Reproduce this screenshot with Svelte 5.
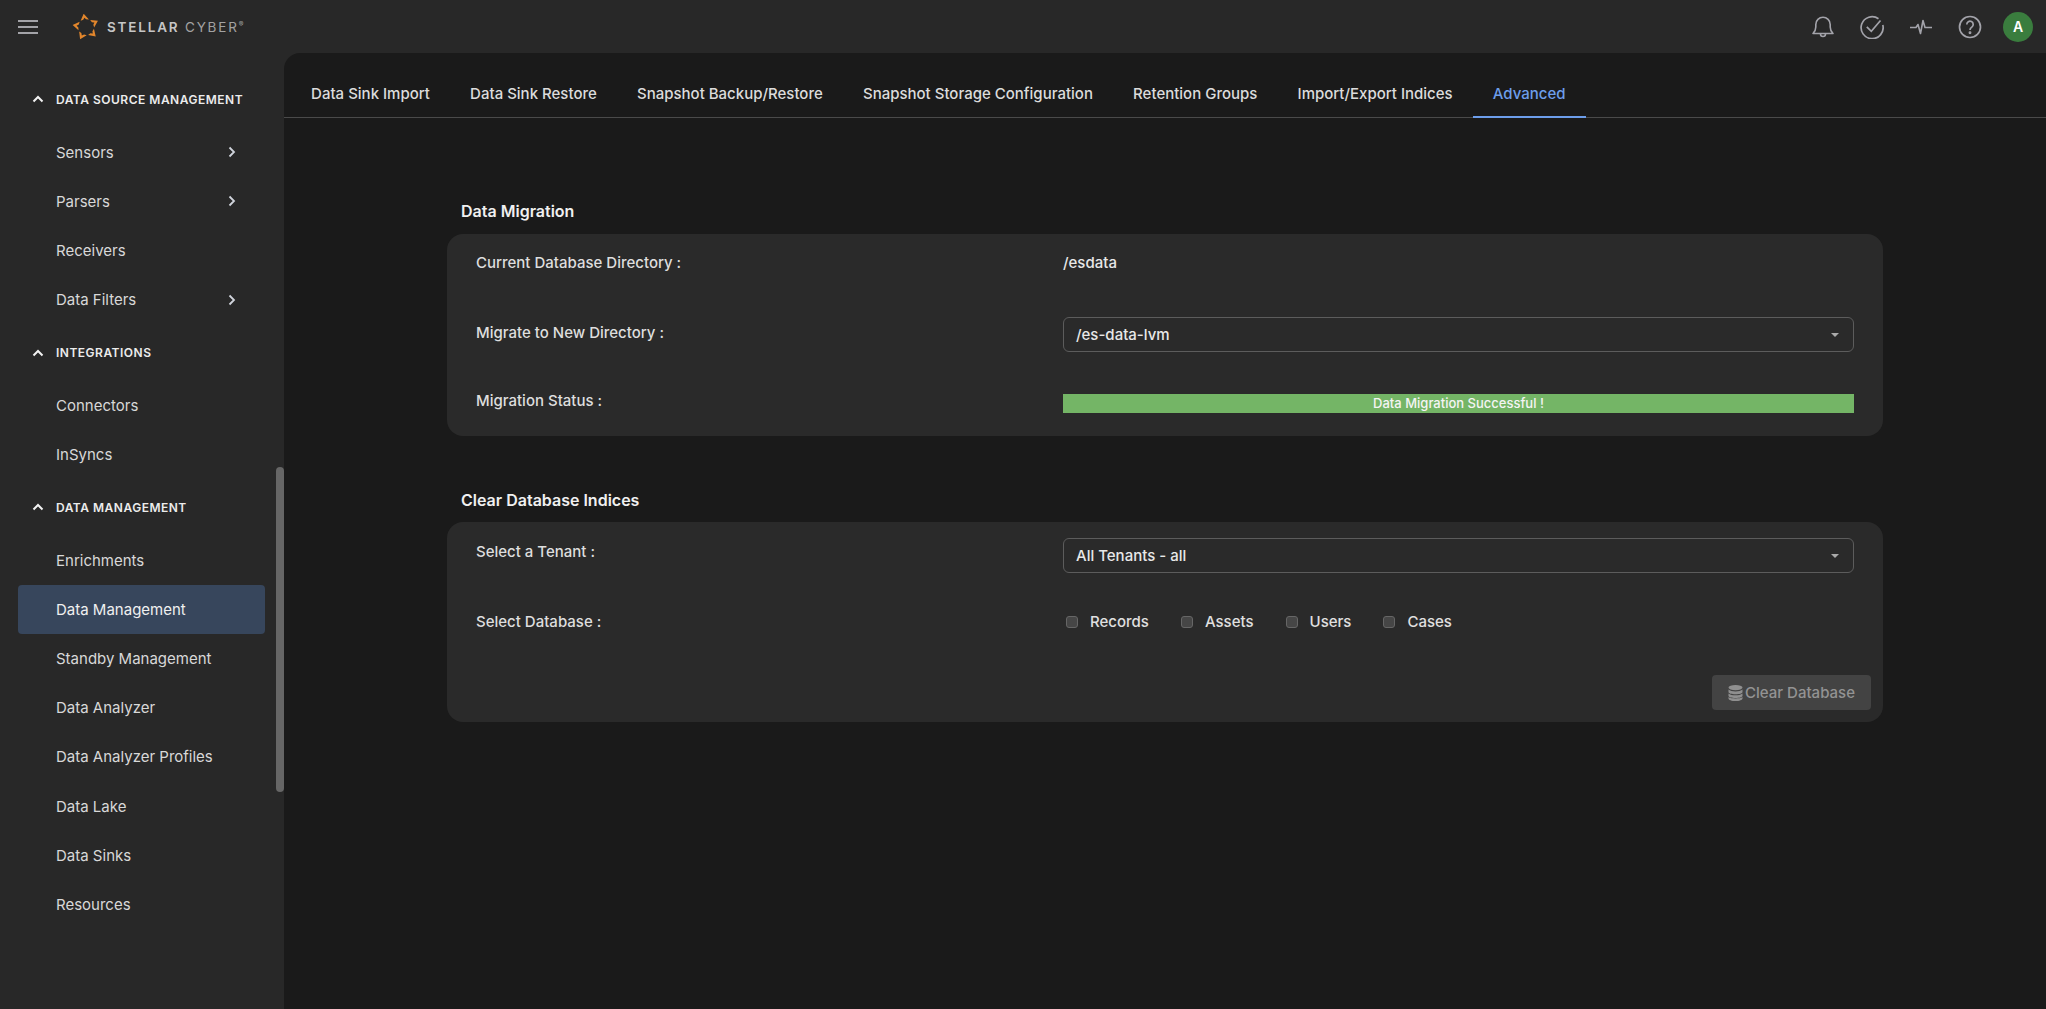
<script>
  const nav = [
    { title: "DATA SOURCE MANAGEMENT", items: [
      { label: "Sensors", more: true },
      { label: "Parsers", more: true },
      { label: "Receivers" },
      { label: "Data Filters", more: true },
    ] },
    { title: "INTEGRATIONS", items: [{ label: "Connectors" }, { label: "InSyncs" }] },
    { title: "DATA MANAGEMENT", items: [
      { label: "Enrichments" },
      { label: "Data Management", active: true },
      { label: "Standby Management" },
      { label: "Data Analyzer" },
      { label: "Data Analyzer Profiles" },
      { label: "Data Lake" },
      { label: "Data Sinks" },
      { label: "Resources" },
    ] },
  ];
  const tabs = [
    "Data Sink Import",
    "Data Sink Restore",
    "Snapshot Backup/Restore",
    "Snapshot Storage Configuration",
    "Retention Groups",
    "Import/Export Indices",
    "Advanced",
  ];
  const databases = ["Records", "Assets", "Users", "Cases"];
</script>

<div class="shell">
  <header class="topbar">
    <div class="brand">
      <svg class="burger" width="20" height="16" viewBox="0 0 20 16">
        <path d="M0 2h20M0 8h20M0 14h20" stroke="#a3a3a8" stroke-width="2" />
      </svg>
      <svg class="star" width="28" height="26" viewBox="-14 -13 28 26">
        {#each [-10, 62, 134, 206, 278] as angle}
          <path
            transform="rotate({angle})"
            d="M0 -13.500 L4.200 -7 L1.500 -7.500 L0 -9.500 L-1.500 -7.500 L-4.200 -7 Z"
            fill="#e2862c"
          />
        {/each}
      </svg>
      <span class="logotext"><b>STELLAR</b> CYBER<sup>®</sup></span>
    </div>
    <div class="actions">
      <svg width="24" height="24" viewBox="0 0 24 24" fill="none" stroke="#a3a3aa" stroke-width="1.6">
        <path d="M2 18.500c2-2 2.800-3.500 2.800-6.500V9.500a7.200 7.200 0 0 1 14.400 0V12c0 3 .8 4.500 2.800 6.500z" stroke-linejoin="round" />
        <path d="M9.500 19a2.500 2.500 0 0 0 5 0" />
      </svg>
      <svg width="24" height="24" viewBox="0 0 24 24" fill="none" stroke="#a3a3aa" stroke-width="1.7">
        <path d="M18.500 3.700A11 11 0 1 0 22.800 10" />
        <path d="M6.800 11.800l4.500 4.500L20.500 5.500" />
      </svg>
      <svg width="24" height="24" viewBox="0 0 24 24" fill="none" stroke="#a3a3aa" stroke-width="1.6">
        <path d="M1 12.500h6l2-3 2.500 9 2.500-13 2 7h7" stroke-linejoin="round" />
      </svg>
      <svg width="24" height="24" viewBox="0 0 24 24" fill="none" stroke="#a3a3aa" stroke-width="1.7">
        <circle cx="12" cy="12" r="10.500" />
        <path d="M8.800 9.500a3.200 3.200 0 1 1 5 2.600c-1.200.8-1.800 1.400-1.800 2.800" />
        <circle cx="12" cy="17.800" r=".6" fill="#a3a3aa" />
      </svg>
      <div class="avatar">A</div>
    </div>
  </header>

  <div class="body">
    <aside class="sidebar">
      {#each nav as group}
        <div class="group-title">
          <svg width="12" height="8" viewBox="0 0 12 8" fill="none">
            <path d="M1.500 6.500L6 2l4.500 4.500" stroke="#f2f2f2" stroke-width="2" />
          </svg>
          {group.title}
        </div>
        {#each group.items as item}
          <div class="nav-item" class:active={item.active}>
            {item.label}
            {#if item.more}
              <svg width="8" height="12" viewBox="0 0 8 12" fill="none">
                <path d="M1.500 1.500L6 6l-4.500 4.500" stroke="#d0d4dc" stroke-width="1.800" />
              </svg>
            {/if}
          </div>
        {/each}
      {/each}
      <div class="scrollthumb"></div>
    </aside>

    <main class="main">
      <nav class="tabs">
        {#each tabs as tab}
          <div class="tab" class:current={tab === "Advanced"}>{tab}</div>
        {/each}
      </nav>

      <div class="content">
        <h3>Data Migration</h3>
        <section class="card first">
          <div class="row">
            <span class="label">Current Database Directory :</span>
            <span class="value">/esdata</span>
          </div>
          <div class="row gap">
            <span class="label nudge">Migrate to New Directory :</span>
            <div class="select">/es-data-lvm<i class="caret"></i></div>
          </div>
          <div class="row gap">
            <span class="label">Migration Status :</span>
            <div class="status">Data Migration Successful !</div>
          </div>
        </section>

        <h3 class="second">Clear Database Indices</h3>
        <section class="card">
          <div class="row">
            <span class="label nudge-sm">Select a Tenant :</span>
            <div class="select">All Tenants - all<i class="caret"></i></div>
          </div>
          <div class="row gap">
            <span class="label">Select Database :</span>
            <div class="checks">
              {#each databases as db}
                <div class="check"><i class="box"></i>{db}</div>
              {/each}
            </div>
          </div>
          <div class="footer">
            <button class="clear">
              <svg width="15" height="16" viewBox="0 0 15 16" fill="#8f8f8f">
                <ellipse cx="7.500" cy="2.600" rx="7" ry="2.600" />
                <path d="M.5 4.600c1.400 1.300 4 1.900 7 1.900s5.600-.6 7-1.900v2.300c0 1.300-3.100 2.300-7 2.300s-7-1-7-2.300z" />
                <path d="M.5 8.400c1.400 1.300 4 1.900 7 1.900s5.600-.6 7-1.900v2.300c0 1.300-3.100 2.300-7 2.300s-7-1-7-2.300z" />
                <path d="M.5 12c1.400 1.300 4 1.400 7 1.400s5.600-.1 7-1.400v1.400c0 1.400-3.100 2.600-7 2.600s-7-1.200-7-2.600z" />
              </svg>
              Clear Database
            </button>
          </div>
        </section>
      </div>
    </main>
  </div>
</div>

<style>
  :global(body) {
    background: #282828;
  }
  .shell {
    width: 2046px;
    height: 1009px;
    overflow: hidden;
    display: flex;
    flex-direction: column;
    font-family: Inter, "Liberation Sans", sans-serif;
    font-size: 15px;
    font-weight: 500;
    color: #e4e4e4;
    background: #282828;
  }
  .topbar {
    height: 53px;
    flex: none;
    display: flex;
    align-items: center;
    justify-content: space-between;
  }
  .brand {
    display: flex;
    align-items: center;
    padding-left: 18px;
  }
  .star {
    margin-left: 34px;
  }
  .logotext {
    margin-left: 7px;
    font-size: 13.500px;
    font-weight: 400;
    letter-spacing: 1.800px;
    color: #a2a2a2;
    white-space: nowrap;
  }
  .logotext b {
    font-weight: 600;
    color: #c6c6c6;
  }
  .logotext sup {
    font-size: 7px;
    letter-spacing: 0;
  }
  .actions {
    display: flex;
    align-items: center;
    gap: 25px;
    padding-right: 13px;
  }
  .avatar {
    width: 30px;
    height: 30px;
    margin-left: -4px;
    border-radius: 50%;
    background: #3a7d3e;
    color: #fff;
    font-size: 14px;
    font-weight: 600;
    display: flex;
    align-items: center;
    justify-content: center;
  }
  .body {
    flex: 1;
    display: flex;
    min-height: 0;
  }
  .sidebar {
    position: relative;
    width: 284px;
    flex: none;
    padding: 18px 19px 0 18px;
    box-sizing: border-box;
  }
  .group-title {
    display: flex;
    align-items: center;
    gap: 12px;
    height: 56.500px;
    padding-left: 14px;
    font-size: 12px;
    font-weight: 600;
    letter-spacing: 0.500px;
    color: #ececec;
  }
  .nav-item {
    height: 49.200px;
    display: flex;
    align-items: center;
    justify-content: space-between;
    padding: 0 29px 0 38px;
    border-radius: 4px;
    font-weight: 400;
    color: #d8d8d8;
  }
  .nav-item.active {
    background: #37465c;
    color: #f0f0f0;
  }
  .scrollthumb {
    position: absolute;
    right: 0;
    top: 414px;
    width: 8px;
    height: 325px;
    border-radius: 4px;
    background: #666;
  }
  .main {
    flex: 1;
    background: #1a1a1a;
    border-top-left-radius: 16px;
    min-width: 0;
  }
  .tabs {
    height: 65px;
    box-sizing: border-box;
    display: flex;
    padding-left: 7px;
    border-bottom: 1px solid #4a4a4a;
  }
  .tab {
    padding: 32px 20.100px 0;
    margin-bottom: -1px;
    color: #dcdcdc;
    line-height: 18px;
  }
  .tab.current {
    color: #6d9eeb;
    border-bottom: 2px solid #6d9eeb;
  }
  .content {
    padding: 84px 163px 0;
  }
  h3 {
    margin: 0 0 14px 14px;
    font-size: 16px;
    line-height: 18px;
    font-weight: 600;
    color: #f0f0f0;
  }
  h3.second {
    margin-top: 55px;
    margin-bottom: 13px;
  }
  .card {
    background: #2a2a2a;
    border-radius: 16px;
    padding: 16px 29px 12px;
  }
  .card.first {
    padding-top: 22px;
    padding-bottom: 23px;
  }
  .row {
    display: grid;
    grid-template-columns: 587px 1fr;
    align-items: start;
    line-height: 14px;
  }
  .row.gap {
    margin-top: 42px;
  }
  .card.first .row:nth-child(2) {
    margin-top: 47px;
  }
  .label {
    color: #dedede;
  }
  .label.nudge {
    padding-top: 9px;
  }
  .label.nudge-sm {
    padding-top: 7px;
  }
  .value {
    color: #e8e8e8;
  }
  .select {
    height: 35px;
    box-sizing: border-box;
    border: 1px solid #5c5c5c;
    border-radius: 6px;
    padding-left: 12px;
    display: flex;
    align-items: center;
    justify-content: space-between;
    color: #e8e8e8;
  }
  .caret {
    margin-right: 14px;
    border-left: 4px solid transparent;
    border-right: 4px solid transparent;
    border-top: 4px solid #aaa;
  }
  .status {
    height: 19px;
    line-height: 19px;
    background: #74b566;
    color: #f4f4f4;
    font-size: 13px;
    text-align: center;
  }
  .checks {
    display: flex;
    padding-left: 3px;
  }
  .check {
    display: flex;
    align-items: center;
    gap: 12px;
    margin-right: 32px;
    color: #e0e0e0;
  }
  .box {
    width: 12px;
    height: 12px;
    box-sizing: border-box;
    border: 1px solid #666;
    border-radius: 3px;
    background: #464646;
  }
  .footer {
    display: flex;
    justify-content: flex-end;
    margin-top: 46px;
    margin-right: -17px;
  }
  .clear {
    width: 159px;
    height: 35px;
    display: flex;
    align-items: center;
    justify-content: center;
    gap: 2px;
    border: none;
    border-radius: 4px;
    background: #434343;
    color: #939393;
    font-family: inherit;
    font-size: 15px;
    font-weight: 500;
  }
</style>
